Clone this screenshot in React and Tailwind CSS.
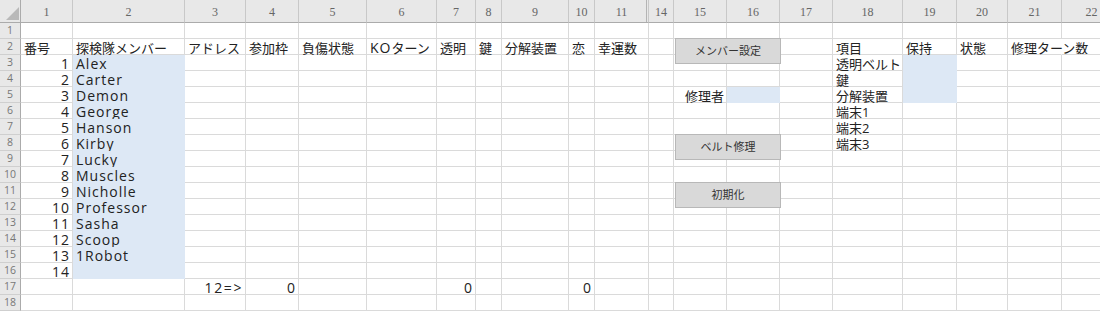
import React from 'react';

const HEADS = ['1', '2', '3', '4', '5', '6', '7', '8', '9', '10', '11', '14', '15', '16', '17', '18', '19', '20', '21', '22'];
const NAMES = ['Alex', 'Carter', 'Demon', 'George', 'Hanson', 'Kirby', 'Lucky', 'Muscles', 'Nicholle', 'Professor', 'Sasha', 'Scoop', '1Robot'];

// sheet contents, keyed "row-col" (col = index of visible column)
const cells = {};
const put = (r, c, t, opts = {}) => {
  cells[`${r}-${c}`] = { t, ...opts };
};

put(2, 0, '番号');
put(2, 1, '探検隊メンバー');
put(2, 2, 'アドレス');
put(2, 3, '参加枠');
put(2, 4, '負傷状態');
put(2, 5, <><span className="text-[14px] tracking-[1px]">KO</span>ターン</>);
put(2, 6, '透明');
put(2, 7, '鍵');
put(2, 8, '分解装置');
put(2, 9, '恋');
put(2, 10, '幸運数');
put(2, 15, '項目');
put(2, 16, '保持');
put(2, 17, '状態');
put(2, 18, '修理ターン数', { spill: true });

for (let r = 3; r <= 16; r++) put(r, 0, String(r - 2), { right: true, latin: true });
NAMES.forEach((n, i) => put(i + 3, 1, n, { latin: true }));

put(5, 12, '修理者', { right: true });
['透明ベルト', '鍵', '分解装置', '端末1', '端末2', '端末3'].forEach((t, i) => put(i + 3, 15, t));

put(17, 2, '12=>', { right: true, latin: true, wide: true });
put(17, 3, '0', { right: true, latin: true });
put(17, 6, '0', { right: true, latin: true });
put(17, 9, '0', { right: true, latin: true });

const isBlue = (r, c) =>
  (c === 1 && r >= 3 && r <= 16) || (c === 13 && r === 5) || (c === 16 && r >= 3 && r <= 5);

const Cell = ({ r, c }) => {
  const cell = cells[`${r}-${c}`];
  const blue = isBlue(r, c);
  let cls = 'flex items-end whitespace-nowrap border-r border-b';
  if (blue) cls += ' bg-[#dde8f5] border-r-[#dde8f5] border-b-[#dde8f5]';
  else cls += (cell && cell.spill ? ' border-r-transparent' : ' border-r-[#dadada]') + ' border-b-[#dadada]';
  if (cell && cell.right) cls += ' justify-end pr-[2px]';
  else cls += ' pl-[3px]';
  return (
    <div className={cls}>
      {cell && (
        <span
          className={
            cell.latin
              ? `leading-[13px] text-[14px] ${cell.wide ? 'tracking-[1.6px]' : 'tracking-[1px]'}`
              : 'leading-[11px]'
          }
        >
          {cell.t}
        </span>
      )}
    </div>
  );
};

const SheetButton = ({ top, label }) => (
  <div
    className={`absolute left-[675px] ${top} flex h-[26px] w-[106px] items-center justify-center border border-[#b8b8b8] bg-[#d9d9d9] text-[11px] text-[#333]`}
  >
    {label}
  </div>
);

export default function App() {
  const rows = Array.from({ length: 18 }, (_, i) => i + 1);

  return (
    <div className="relative h-[312px] w-[1100px] overflow-hidden bg-white font-['Open_Sans','Noto_Sans_CJK_JP',sans-serif] text-[13px] text-[#222]">
      <div className="grid w-max grid-cols-[21px_52px_112px_61px_53px_68px_70px_39px_26px_67px_26px_54px_25px_53px_53px_53px_70px_54px_51px_54px_60px] grid-rows-[23px_repeat(18,16px)]">
        {/* corner */}
        <div className="border-r border-b border-r-[#ababab] border-b-[#ababab] bg-[#e8e8e8]">
          <svg width="20" height="22" viewBox="0 0 20 22">
            <polygon points="19,7 19,20 6,20" fill="#b9b9b9" />
          </svg>
        </div>
        {HEADS.map((h, i) => (
          <div
            key={h}
            className={`flex items-center justify-center border-r border-b border-r-[#c8c8c8] border-b-[#ababab] bg-[#e8e8e8] pt-[2px] font-['Liberation_Serif',serif] text-[12px] text-[#666] ${
              i === 10 ? 'shadow-[inset_-1px_0_0_#e8e8e8,inset_-2px_0_0_#b4b4b4]' : ''
            }`}
          >
            {h}
          </div>
        ))}

        {rows.map((r) => (
          <React.Fragment key={r}>
            <div className="flex items-center justify-center border-r border-b border-r-[#ababab] border-b-[#cfcfcf] bg-[#e8e8e8] text-[10.5px] text-[#777]">
              {r}
            </div>
            {HEADS.map((h, c) => (
              <Cell key={h} r={r} c={c} />
            ))}
          </React.Fragment>
        ))}
      </div>

      <SheetButton top="top-[38px]" label="メンバー設定" />
      <SheetButton top="top-[134px]" label="ベルト修理" />
      <SheetButton top="top-[182px]" label="初期化" />
    </div>
  );
}
